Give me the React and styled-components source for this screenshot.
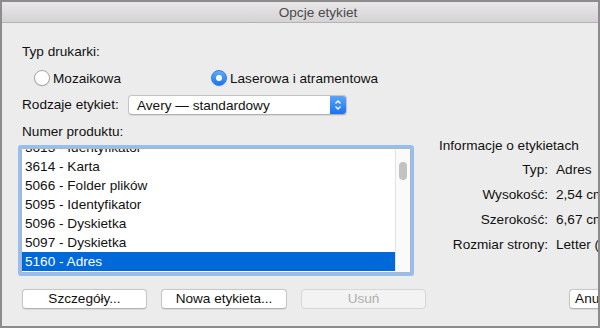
import React from 'react';
import styled, { createGlobalStyle } from 'styled-components';

const GlobalStyle = createGlobalStyle`
  html, body {
    margin: 0;
    padding: 0;
    background: #ececec;
  }
  * {
    box-sizing: border-box;
  }
`;

const Frame = styled.div`
  width: 600px;
  height: 328px;
  border: 2px solid #8c8c8c;
  overflow: hidden;
  background: #ececec;
  font-family: 'Liberation Sans', Arial, sans-serif;
  font-size: 13.6px;
  color: #111;
`;

const Window = styled.div`
  width: 632px;
`;

const TitleBar = styled.div`
  height: 21px;
  border-bottom: 1px solid #b3b3b3;
  background: linear-gradient(#e9e7e9, #d4d2d4);
  display: flex;
  align-items: center;
  justify-content: center;
  color: #4a4a4a;
`;

const Body = styled.div`
  padding: 21px 20px 0 20px;
  display: flex;
  flex-direction: column;
`;

const Label = styled.div`
  line-height: 16px;
  height: 16px;
  white-space: nowrap;
  width: ${p => p.width || 'auto'};
  flex: none;
`;

const RadioRow = styled.div`
  display: flex;
  align-items: center;
  margin: 10px 0 0 12px;
  height: 16px;
`;

const RadioOption = styled.label`
  display: flex;
  align-items: center;
  gap: 3px;
  width: ${p => p.width || 'auto'};
  white-space: nowrap;
`;

const RadioCircle = styled.span`
  width: 16px;
  height: 16px;
  border-radius: 50%;
  display: flex;
  align-items: center;
  justify-content: center;
  flex: none;
  border: 1px solid ${p => (p.checked ? '#2f7fe6' : '#a6a6a6')};
  background: ${p => (p.checked ? 'linear-gradient(#63acfb, #1b74ef)' : '#fff')};
  box-shadow: 0 0.5px 1px rgba(0, 0, 0, 0.12);

  &::after {
    content: '';
    display: ${p => (p.checked ? 'block' : 'none')};
    width: 6px;
    height: 6px;
    border-radius: 50%;
    background: #fff;
  }
`;

const PopupRow = styled.div`
  display: flex;
  align-items: center;
  margin-top: 9px;
  height: 20px;
`;

const Popup = styled.div`
  width: 219px;
  height: 20px;
  display: flex;
  align-items: center;
  background: #fff;
  border: 1px solid #c4c4c4;
  border-bottom-color: #b0b0b0;
  border-radius: 4px;
  overflow: hidden;
  box-shadow: 0 0.5px 1px rgba(0, 0, 0, 0.08);
`;

const PopupText = styled.span`
  flex: 1;
  padding-left: 8px;
  white-space: nowrap;
`;

const Stepper = styled.span`
  width: 16px;
  height: 100%;
  display: flex;
  align-items: center;
  justify-content: center;
  background: linear-gradient(#5aa5fa, #1a72ee);
`;

const ListArea = styled.div`
  display: grid;
  grid-template-columns: 389px 1fr;
  column-gap: 28px;
  margin-top: 9px;
`;

const ListColumn = styled.div`
  display: flex;
  flex-direction: column;
`;

const ListBox = styled.div`
  margin: 8px 0 0 -1px;
  width: 390px;
  height: 125px;
  border: 1px solid #b4b4b4;
  box-shadow: 0 0 0 3px #93bff2;
  border-radius: 1px;
  background: #fff;
  display: flex;
  overflow: hidden;
`;

const ListViewport = styled.div`
  flex: 1;
  overflow: hidden;
`;

const ListRow = styled.div`
  height: 19px;
  line-height: 19px;
  padding-left: 3px;
  white-space: nowrap;
  background: ${p => (p.selected ? '#0069d9' : 'transparent')};
  color: ${p => (p.selected ? '#fff' : '#111')};
`;

const ScrollTrack = styled.div`
  width: 15px;
  flex: none;
  background: #fafafa;
  border-left: 1px solid #e3e3e3;
  padding: 13px 0 0 3px;
`;

const ScrollThumb = styled.div`
  width: 8px;
  height: 18px;
  border-radius: 4px;
  background: #c2c2c2;
`;

const InfoColumn = styled.div`
  padding-top: 14px;
  display: flex;
  flex-direction: column;
`;

const InfoGrid = styled.div`
  display: grid;
  grid-template-columns: 109px 1fr;
  column-gap: 8px;
  row-gap: 9px;
  margin-top: 8px;
  line-height: 16px;
  white-space: nowrap;
`;

const InfoKey = styled.span`
  text-align: right;
`;

const ButtonRow = styled.div`
  display: flex;
  gap: 14px;
  margin-top: 16px;
`;

const Button = styled.button`
  width: ${p => p.width || 125}px;
  height: 20px;
  padding: 0;
  font-family: inherit;
  font-size: inherit;
  line-height: 18px;
  border-radius: 4px;
  border: 1px solid #c6c6c6;
  border-bottom-color: #b2b2b2;
  background: ${p => (p.disabled ? '#f3f3f3' : '#fff')};
  color: ${p => (p.disabled ? '#aeaeae' : '#111')};
  box-shadow: ${p => (p.disabled ? 'none' : '0 0.5px 1px rgba(0, 0, 0, 0.08)')};
  flex: none;
  margin-left: ${p => p.offset || 0}px;
  &:disabled {
    border-color: #d6d6d6;
  }
`;

const products = [
  '3613 - Identyfikator',
  '3614 - Karta',
  '5066 - Folder plików',
  '5095 - Identyfikator',
  '5096 - Dyskietka',
  '5097 - Dyskietka',
  '5160 - Adres',
];

const info = [
  ['Typ:', 'Adres'],
  ['Wysokość:', '2,54 cm'],
  ['Szerokość:', '6,67 cm'],
  ['Rozmiar strony:', 'Letter (21,59 x 27,94 cm)'],
];

function StepperIcon() {
  return (
    <svg width="8" height="12" viewBox="0 0 8 12">
      <path d="M1.5 4.5 L4 2 L6.5 4.5" fill="none" stroke="#fff" strokeWidth="1.3" />
      <path d="M1.5 7.5 L4 10 L6.5 7.5" fill="none" stroke="#fff" strokeWidth="1.3" />
    </svg>
  );
}

export default function App() {
  const selected = '5160 - Adres';
  const scrollOffset = -11;

  return (
    <Frame>
      <GlobalStyle />
      <Window>
        <TitleBar>Opcje etykiet</TitleBar>
        <Body>
          <Label>Typ drukarki:</Label>
          <RadioRow>
            <RadioOption width="177px">
              <RadioCircle />
              Mozaikowa
            </RadioOption>
            <RadioOption>
              <RadioCircle checked />
              Laserowa i atramentowa
            </RadioOption>
          </RadioRow>
          <PopupRow>
            <Label width="106px">Rodzaje etykiet:</Label>
            <Popup>
              <PopupText>Avery — standardowy</PopupText>
              <Stepper>
                <StepperIcon />
              </Stepper>
            </Popup>
          </PopupRow>
          <ListArea>
            <ListColumn>
              <Label>Numer produktu:</Label>
              <ListBox>
                <ListViewport>
                  <div style={{ marginTop: scrollOffset }}>
                    {products.map(p => (
                      <ListRow key={p} selected={p === selected}>
                        {p}
                      </ListRow>
                    ))}
                  </div>
                </ListViewport>
                <ScrollTrack>
                  <ScrollThumb />
                </ScrollTrack>
              </ListBox>
            </ListColumn>
            <InfoColumn>
              <Label>Informacje o etykietach</Label>
              <InfoGrid>
                {info.map(([k, v]) => (
                  <React.Fragment key={k}>
                    <InfoKey>{k}</InfoKey>
                    <span>{v}</span>
                  </React.Fragment>
                ))}
              </InfoGrid>
            </InfoColumn>
          </ListArea>
          <ButtonRow>
            <Button>Szczegóły...</Button>
            <Button width={126}>Nowa etykieta...</Button>
            <Button disabled>Usuń</Button>
            <Button width={50} offset={129}>
              Anuluj
            </Button>
          </ButtonRow>
        </Body>
      </Window>
    </Frame>
  );
}
